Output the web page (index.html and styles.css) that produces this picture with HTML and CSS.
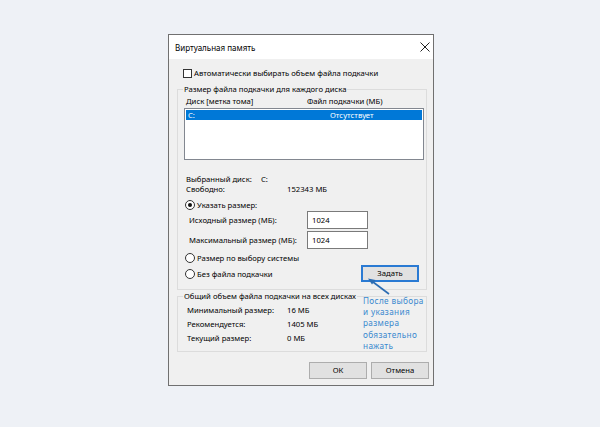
FILE: index.html
```html
<!DOCTYPE html>
<html>
  <head>
    <meta charset="UTF-8">
    <title>Виртуальная память</title>
    <link rel="stylesheet" href="styles.css">
  </head>
  <body>
    <div class="page">
      <div class="dialog">

        <!-- title bar -->
        <div class="titlebar">
          <span class="title">Виртуальная память</span>
          <svg class="close" width="10" height="10" viewBox="0 0 10 10">
            <path d="M0.5 0.5 L9.5 9.5 M9.5 0.5 L0.5 9.5" stroke="#222" stroke-width="1" fill="none" />
          </svg>
        </div>

        <div class="content">
          <label class="check">
            <span class="box"></span>
            Автоматически выбирать объем файла подкачки
          </label>

          <!-- per-disk settings -->
          <fieldset class="group group-disk">
            <legend>Размер файла подкачки для каждого диска</legend>

            <div class="group-body">
              <div class="list-head">
                <span class="col-disk">Диск [метка тома]</span>
                <span class="col-file">Файл подкачки (МБ)</span>
              </div>
              <div class="listbox">
                <div class="list-row selected">
                  <span class="col-disk">C:</span>
                  <span class="col-state">Отсутствует</span>
                </div>
              </div>

              <div class="info">
                <div class="info-row">
                  <span class="info-label">Выбранный диск:</span>
                  <span class="info-disk">C:</span>
                </div>
                <div class="info-row">
                  <span class="info-label">Свободно:</span>
                  <span class="info-free">152343 МБ</span>
                </div>
              </div>

              <label class="radio-row first">
                <span class="radio checked"></span>
                Указать размер:
              </label>
              <div class="size-row">
                <span class="size-label">Исходный размер (МБ):</span>
                <span class="textbox">1024</span>
              </div>
              <div class="size-row">
                <span class="size-label">Максимальный размер (МБ):</span>
                <span class="textbox">1024</span>
              </div>
              <label class="radio-row">
                <span class="radio"></span>
                Размер по выбору системы
              </label>
              <div class="set-row">
                <label class="radio-row">
                  <span class="radio"></span>
                  Без файла подкачки
                </label>
                <span class="btn btn-focus">Задать</span>
              </div>
            </div>
          </fieldset>

          <!-- totals -->
          <fieldset class="group group-total">
            <legend>Общий объем файла подкачки на всех дисках</legend>
            <div class="group-body">
              <div class="total-row">
                <span class="total-label">Минимальный размер:</span>
                <span>16 МБ</span>
              </div>
              <div class="total-row">
                <span class="total-label">Рекомендуется:</span>
                <span>1405 МБ</span>
              </div>
              <div class="total-row">
                <span class="total-label">Текущий размер:</span>
                <span>0 МБ</span>
              </div>
            </div>
          </fieldset>

          <div class="buttons">
            <span class="btn">ОК</span>
            <span class="btn">Отмена</span>
          </div>
        </div>

        <!-- annotation drawn over the screenshot -->
        <svg class="arrow" width="30" height="24" viewBox="0 0 30 24">
          <path d="M25 19 L9 7" stroke="#2b6cb3" stroke-width="1.6" fill="none" />
          <path d="M4 3.5 L11.5 5 L8 9.5 Z" fill="#2b6cb3" />
        </svg>
        <div class="note">
          <div>После выбора</div>
          <div>и указания</div>
          <div>размера</div>
          <div>обязательно</div>
          <div>нажать</div>
        </div>
      </div>
    </div>
  </body>
</html>
```

FILE: styles.css
```css
body {
  margin: 0;
  background-color: #eef1f6;
  font-family: "Noto Sans", "Open Sans", sans-serif;
  font-size: 7.7px;
  color: #000;
}

.page {
  height: 427px;
  box-sizing: border-box;
  padding: 34px 0 0 168px;
}

.dialog {
  position: relative;
  width: 266px;
  height: 352px;
  box-sizing: border-box;
  border: 1px solid #707070;
  background-color: #f0f0f0;
  display: flex;
  flex-direction: column;
}

.titlebar {
  height: 24px;
  background-color: #fff;
  display: flex;
  align-items: center;
  justify-content: space-between;
  padding: 0 3px 0 6px;
  font-size: 8px;
}

.close {
  display: block;
}

.content {
  padding: 8px 6px 0 8px;
  display: flex;
  flex-direction: column;
}

.check {
  display: flex;
  align-items: center;
  gap: 2px;
  height: 12px;
  margin-left: 6px;
}

.box {
  width: 7px;
  height: 7px;
  border: 1px solid #333;
  background-color: #fff;
}

.group {
  margin: 0;
  width: 250px;
  box-sizing: border-box;
  border: 1px solid #dcdcdc;
  padding: 0;
}

.group legend {
  margin-left: 5px;
  padding: 0 1px;
  line-height: 12px;
}

.group-disk {
  margin-top: 4px;
}

.group-disk .group-body {
  padding: 0 2px 7px 6px;
}

.list-head {
  display: flex;
  height: 12px;
  line-height: 12px;
  padding-left: 2px;
}

.col-disk {
  width: 121px;
}

.listbox {
  margin-top: 1px;
  height: 52px;
  box-sizing: border-box;
  border: 1px solid #828790;
  background-color: #fff;
  padding: 1px;
}

.list-row {
  display: flex;
  height: 10px;
  line-height: 10px;
  padding-left: 2px;
}

.list-row.selected {
  background-color: #0078d7;
  color: #fff;
}

.col-state {
  margin-left: 21px;
}

.info {
  margin-top: 14px;
  padding-left: 2px;
}

.info-row {
  display: flex;
  height: 10px;
  line-height: 10px;
}

.info-label {
  width: 75px;
}

.info-free {
  margin-left: 26px;
}

.radio-row {
  display: flex;
  align-items: center;
  gap: 2px;
  height: 12px;
  margin-top: 3px;
  margin-left: 1px;
}

.radio-row.first {
  margin-top: 5px;
}

.radio {
  width: 8px;
  height: 8px;
  border: 1px solid #333;
  border-radius: 50%;
  background-color: #fff;
  position: relative;
}

.radio.checked::after {
  content: "";
  position: absolute;
  left: 2px;
  top: 2px;
  width: 4px;
  height: 4px;
  border-radius: 50%;
  background-color: #111;
}

.size-row {
  display: flex;
  align-items: center;
  height: 18px;
  margin-bottom: 2px;
  padding-left: 5px;
}

.size-label {
  width: 118px;
}

.textbox {
  width: 61px;
  height: 18px;
  box-sizing: border-box;
  border: 1px solid #7a7a7a;
  background-color: #fff;
  line-height: 16px;
  padding-left: 4px;
}

.set-row {
  display: flex;
  align-items: center;
  justify-content: space-between;
  height: 17px;
  margin-top: 1px;
  padding-right: 5px;
}

.set-row .radio-row {
  margin-top: 0;
}

.btn {
  width: 58px;
  height: 17px;
  box-sizing: border-box;
  border: 1px solid #adadad;
  background-color: #e1e1e1;
  text-align: center;
  line-height: 15px;
}

.btn-focus {
  border: 2px solid #2a7ad3;
  line-height: 13px;
}

.group-total .group-body {
  padding: 1px 0 6px 9px;
}

.total-row {
  display: flex;
  height: 14px;
  line-height: 14px;
}

.total-label {
  width: 100px;
}

.buttons {
  display: flex;
  justify-content: flex-end;
  gap: 4px;
  margin-top: 10px;
  margin-right: -2px;
}

.arrow {
  position: absolute;
  left: 195px;
  top: 240px;
}

.note {
  position: absolute;
  left: 194px;
  top: 260px;
  font-size: 8.2px;
  letter-spacing: 0.35px;
  color: #3a89cf;
}

.note div {
  height: 11.2px;
  line-height: 11.2px;
}
```
